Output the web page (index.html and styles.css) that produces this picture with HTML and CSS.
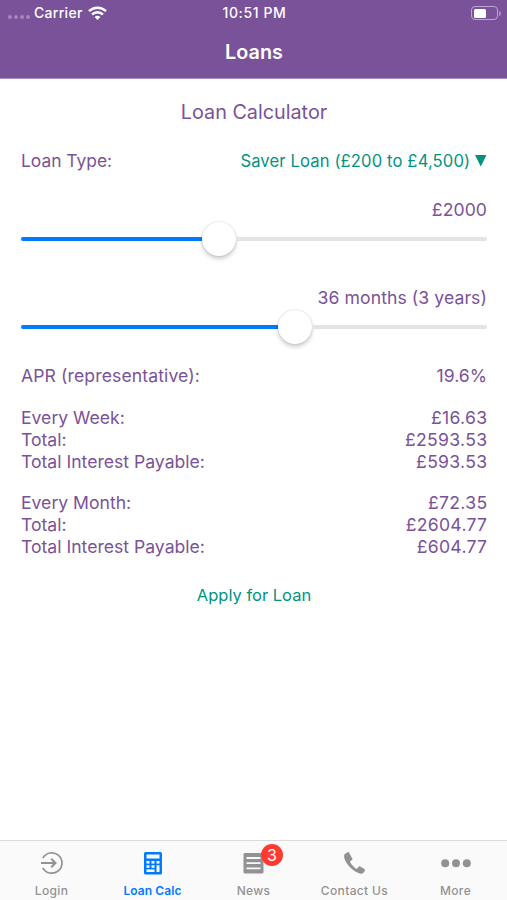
FILE: index.html
```html
<!DOCTYPE html>
<html lang="en">

<head>
    <meta charset="UTF-8">
    <meta name="viewport" content="width=device-width, initial-scale=1">
    <title>Loans</title>
    <link rel="stylesheet" href="styles.css">
</head>

<body>
    <header class="header">
        <div class="status-bar">
            <div class="status-left">
                <span class="signal"><i></i><i></i><i></i><i></i></span>
                <span class="carrier">Carrier</span>
                <svg class="wifi" viewBox="0 0 19 14" width="19" height="14" fill="none" stroke="#fff" stroke-width="2.5">
                    <path d="M1 5.2a12.2 12.2 0 0 1 17 0" />
                    <path d="M4.1 8.5a7.8 7.8 0 0 1 10.8 0" />
                    <path d="M9.5 14 6.6 11.1a4.1 4.1 0 0 1 5.8 0z" fill="#fff" stroke="none" />
                </svg>
            </div>
            <span class="time">10:51 PM</span>
            <div class="status-right">
                <span class="battery"><span class="battery-level"></span></span>
                <span class="battery-cap"></span>
            </div>
        </div>
        <h1 class="title">Loans</h1>
    </header>

    <main class="contents">
        <h2 class="heading">Loan Calculator</h2>
        <div class="row loan-type">
            <span class="loan-label">Loan Type:</span>
            <span class="loan-select">Saver Loan (£200 to £4,500)
                <svg viewBox="0 0 12 12" width="12" height="12"><path d="M0 0h11.5L5.75 11.5z" fill="#009480" /></svg>
            </span>
        </div>

        <div class="slider-value amount">£2000</div>
        <div class="slider">
            <span class="track-fill" style="width: 181px"></span>
            <span class="thumb"></span>
            <span class="track-rest"></span>
        </div>

        <div class="slider-value months">36 months (3 years)</div>
        <div class="slider">
            <span class="track-fill" style="width: 257px"></span>
            <span class="thumb"></span>
            <span class="track-rest"></span>
        </div>

        <div class="results">
            <div class="group">
                <div class="row"><span class="apr">APR (representative):</span><span>19.6%</span></div>
            </div>
            <div class="group">
                <div class="row"><span>Every Week:</span><span class="money">£16.63</span></div>
                <div class="row"><span>Total:</span><span class="money">£2593.53</span></div>
                <div class="row"><span>Total Interest Payable:</span><span class="money">£593.53</span></div>
            </div>
            <div class="group">
                <div class="row"><span>Every Month:</span><span class="money">£72.35</span></div>
                <div class="row"><span>Total:</span><span class="money">£2604.77</span></div>
                <div class="row"><span>Total Interest Payable:</span><span class="money">£604.77</span></div>
            </div>
        </div>
        <a class="apply">Apply for Loan</a>
    </main>

    <nav class="tab-bar">
        <a class="tab">
            <svg viewBox="0 0 24 24" width="24" height="24" fill="none" stroke="#929292" stroke-width="1.7">
                <path d="M2.8 7.2a10.2 10.2 0 1 1 0 9.6" />
                <path d="M1 12h14.5M11.2 7.7l4.3 4.3-4.3 4.3" stroke-width="2" />
            </svg>
            <span>Login</span>
        </a>
        <a class="tab active">
            <svg viewBox="0 0 24 24" width="24" height="24">
                <rect x="3" y="1" width="18" height="22.5" rx="1.5" fill="#007aff" />
                <g fill="#fafafa">
                    <rect x="5.5" y="3.5" width="13" height="4" />
                    <rect x="5.5" y="10" width="3" height="2.6" />
                    <rect x="10.5" y="10" width="3" height="2.6" />
                    <rect x="15.5" y="10" width="3" height="2.6" />
                    <rect x="5.5" y="14.2" width="3" height="2.6" />
                    <rect x="10.5" y="14.2" width="3" height="2.6" />
                    <rect x="5.5" y="18.4" width="8" height="2.6" />
                    <rect x="15.5" y="14.2" width="3" height="6.8" />
                </g>
            </svg>
            <span>Loan Calc</span>
        </a>
        <a class="tab">
            <svg viewBox="0 0 24 24" width="24" height="24">
                <rect x="1.5" y="2" width="20" height="20.5" rx="1.5" fill="#929292" />
                <path d="M4.5 7h14M4.5 12.2h14M4.5 17.4h14" stroke="#fafafa" stroke-width="1.8" />
            </svg>
            <span>News</span>
            <span class="badge">3</span>
        </a>
        <a class="tab">
            <svg viewBox="0 0 24 24" width="24" height="24" fill="#929292">
                <path d="M4.5 1.2 1.9 3.1C.5 4.2.8 7.8 3.8 12.3c3.5 5.2 9.7 9.9 14 10.4 1.8.2 3.5-1.2 4.1-3.1.2-.7 0-1.1-.5-1.5l-4.2-2.6c-.6-.3-1.1-.2-1.5.2l-1.5 1.7c-.5.4-1 .3-1.5 0-2.3-1.5-4.4-3.9-5.5-6.1-.2-.5-.1-.9.3-1.2l1.5-1c.5-.4.6-.9.4-1.4L6 1.6c-.3-.6-.9-.7-1.5-.4z" />
            </svg>
            <span>Contact Us</span>
        </a>
        <a class="tab">
            <svg viewBox="0 0 30 24" width="30" height="24" fill="#929292">
                <circle cx="4.2" cy="12.3" r="4" />
                <circle cx="15" cy="12.3" r="4" />
                <circle cx="25.8" cy="12.3" r="4" />
            </svg>
            <span>More</span>
        </a>
    </nav>
</body>

</html>
```
FILE: styles.css
```css
* {
    box-sizing: border-box;
}

body {
    margin: 0;
    height: 900px;
    display: flex;
    flex-direction: column;
    background: #fff;
    color: #7a5299;
    font-family: Inter, "Liberation Sans", sans-serif;
    font-size: 17.6px;
    line-height: 22px;
    overflow: hidden;
}

.header {
    height: 79px;
    background: #7a5299;
    border-bottom: 1px solid #a88dbd;
    color: #fff;
}

.status-bar {
    display: grid;
    grid-template-columns: 1fr auto 1fr;
    align-items: center;
    height: 26px;
    padding: 0 6px 0 8px;
    font-size: 14px;
    font-weight: 500;
}

.status-left {
    display: flex;
    align-items: center;
}

.signal {
    display: flex;
    gap: 2px;
    width: 26px;
    padding-top: 7px;
}

.signal i {
    width: 4px;
    height: 4px;
    border-radius: 50%;
    background: #a487bb;
}

.carrier {
    letter-spacing: 0.3px;
}

.time {
    letter-spacing: 0.6px;
}

.wifi {
    margin-left: 5px;
}

.status-right {
    display: flex;
    align-items: center;
    justify-content: flex-end;
    gap: 1px;
}

.battery {
    width: 27px;
    height: 14px;
    padding: 1.5px 2px;
    border: 1px solid #bba6cb;
    border-radius: 4px;
}

.battery-level {
    display: block;
    width: 12px;
    height: 9px;
    border-radius: 1.5px;
    background: #fff;
}

.battery-cap {
    width: 2px;
    height: 5px;
    border-radius: 0 2px 2px 0;
    background: #a88dbd;
}

.title {
    margin: 14px 0 0;
    padding-left: 1px;
    text-align: center;
    font-size: 19.8px;
    font-weight: 600;
    line-height: 24px;
}

.contents {
    flex: 1;
    padding: 0 20px 0 21px;
}

.heading {
    margin: 21px 0 0;
    text-align: center;
    font-size: 19.8px;
    font-weight: 400;
    line-height: 24px;
}

.row {
    display: flex;
    justify-content: space-between;
}

.loan-type {
    margin-top: 26px;
}

.loan-label {
    font-size: 17.4px;
}

.loan-select {
    color: #009480;
    font-size: 16.6px;
    letter-spacing: 0.13px;
}

.slider-value {
    text-align: right;
    letter-spacing: 0.08px;
}

.amount {
    margin-top: 27px;
}

.months {
    margin-top: 30px;
}

.slider {
    display: flex;
    align-items: center;
    height: 36px;
}

.track-fill {
    height: 4px;
    border-radius: 2px 0 0 2px;
    background: #007aff;
}

.thumb {
    width: 34px;
    height: 34px;
    border-radius: 50%;
    background: #fff;
    box-shadow: 0 3px 4px #00000030, 0 0 2px #00000030;
}

.track-rest {
    flex: 1;
    height: 4px;
    border-radius: 0 2px 2px 0;
    background: #e4e4e4;
}

.results {
    display: flex;
    flex-direction: column;
    gap: 19.5px;
    margin-top: 20px;
}

.apr {
    letter-spacing: 0.1px;
}

.money {
    margin-right: -0.4px;
    letter-spacing: 0.3px;
}

.apply {
    display: block;
    margin-top: 26px;
    text-align: center;
    color: #009480;
    font-size: 16.5px;
}

.tab-bar {
    display: grid;
    grid-template-columns: repeat(5, 101px);
    justify-content: center;
    height: 60px;
    background: #fafafa;
    border-top: 1px solid #dcdcdc;
}

.tab {
    position: relative;
    display: flex;
    flex-direction: column;
    align-items: center;
    padding-top: 10px;
    color: #929292;
    font-size: 12px;
    font-weight: 500;
    letter-spacing: 0.35px;
    line-height: 14px;
}

.tab svg {
    margin-bottom: 9px;
}

.active {
    color: #007aff;
    font-weight: 600;
    letter-spacing: 0.1px;
}

/* unread count over the news icon */
.badge {
    position: absolute;
    top: 3px;
    left: 58px;
    width: 22px;
    height: 22px;
    border-radius: 50%;
    background: #ff3b30;
    color: #fff;
    text-align: center;
    font-size: 16px;
    font-weight: 400;
    letter-spacing: 0;
    line-height: 22px;
}
```
